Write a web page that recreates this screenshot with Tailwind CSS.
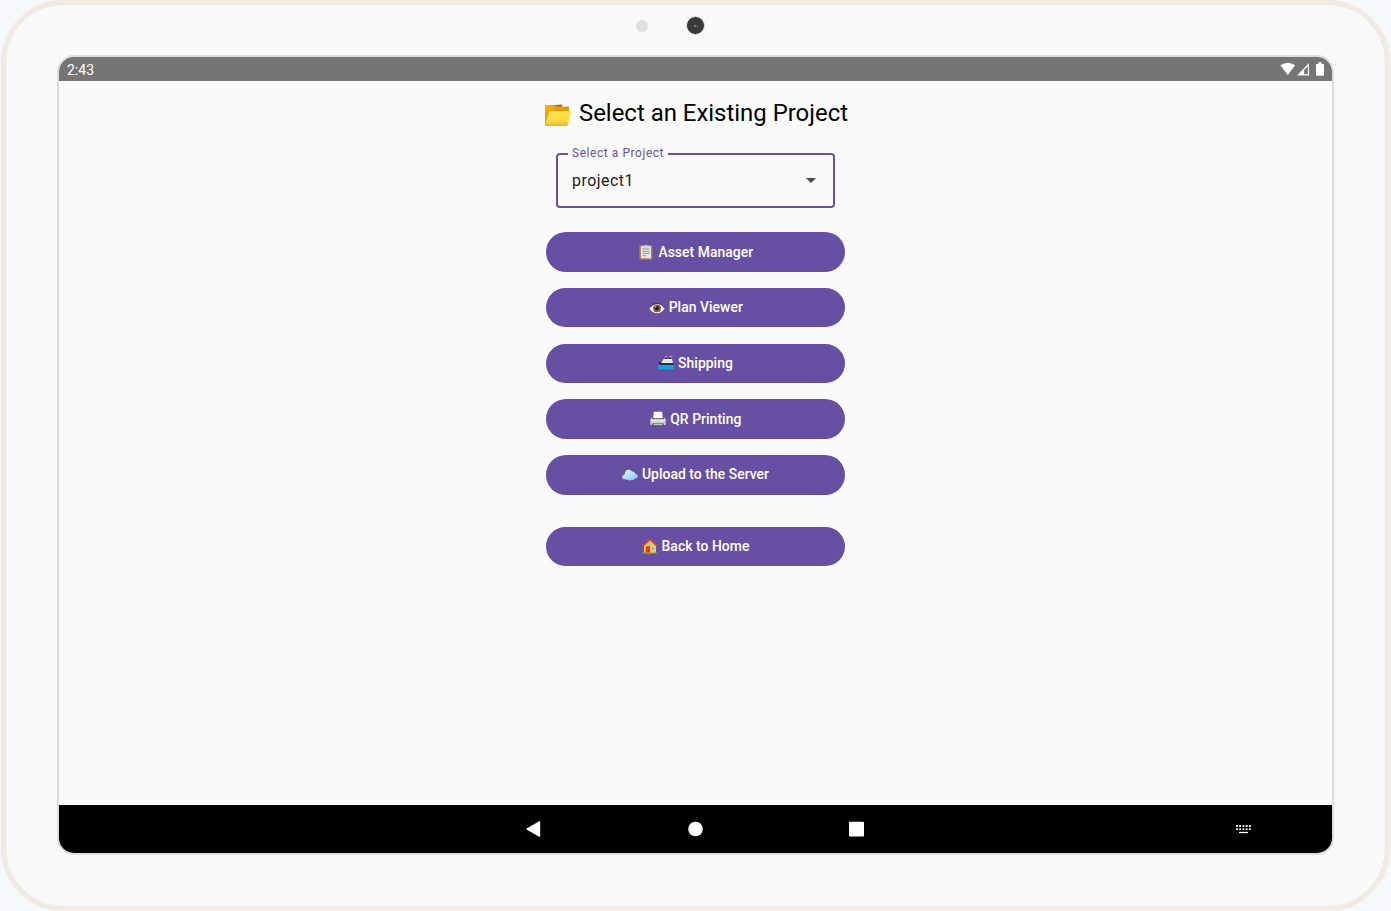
<!DOCTYPE html>
<html lang="en">
<head>
<meta charset="utf-8">
<title>Select an Existing Project</title>
<script src="https://cdn.jsdelivr.net/npm/@tailwindcss/browser@4"></script>
</head>
<body class="h-[911px] w-[1391px] overflow-hidden bg-[#f6f8fb] px-px font-['Roboto',sans-serif]">
<div class="flex h-[911px] w-[1389px] flex-col rounded-[62px] border-x-[4px] border-t-[4px] border-b-[4px] border-[#f0ece1] bg-[#f9f9f9] shadow-[inset_0_0_0_1px_#e9e6df]">
  <header class="flex h-[51px] shrink-0 items-start pt-[12px] pl-[631px]">
    <span class="mt-[4px] size-[12px] rounded-full bg-[#dfdfdf]"></span>
    <span class="ml-[38px] flex size-[19px] items-center justify-center rounded-full border-[1.5px] border-[#dfdfdf] bg-[#3a3a3a]">
      <svg class="size-[8px]" viewBox="0 0 8 8"><circle cx="3" cy="4" r="1.2" fill="#85717b"/><circle cx="5.5" cy="4.5" r="1.2" fill="#555361"/></svg>
    </span>
  </header>

  <main class="ml-[52px] flex h-[800px] w-[1277px] shrink-0 flex-col overflow-hidden rounded-[17px] border-2 border-[#dedede] bg-[#fafafa]">
    <div class="flex h-[24px] shrink-0 items-center bg-[#757575] pl-[8px] text-[14px] text-white">
      <span class="mt-[2px]">2:43</span>
      <svg class="ml-auto mr-[6px] h-[24px] w-[48px]" viewBox="1278 57 48 24" fill="#fff">
        <path d="M1280.4 65.3Q1287.8 60 1295.2 65.3L1287.8 75Z"/>
        <path fill-rule="evenodd" d="M1297 75.5L1309 63V75.5ZM1304.1 74.3H1307.9V66.2L1304.1 70Z"/>
        <path d="M1318.2 62.3h3.6v1.6h1.2q1 0 1 1v9.8q0 1-1 1h-6q-1 0-1-1v-9.8q0-1 1-1h1.2z"/>
      </svg>
    </div>

    <section class="flex flex-1 flex-col items-center">
      <h1 class="mt-[16px] flex h-[32px] items-center pl-[1px] text-[23.93px] whitespace-nowrap text-black">
        <svg class="mt-[4px] mr-[7px] h-[22px] w-[28px]" viewBox="0 0 28 22">
          <defs>
            <linearGradient id="folderBack" x1="0" y1="0" x2="1" y2="1"><stop offset="0" stop-color="#f9ad08"/><stop offset="1" stop-color="#d98500"/></linearGradient>
            <linearGradient id="folderFront" x1="0" y1="0" x2="0" y2="1"><stop offset="0" stop-color="#ffe34e"/><stop offset=".65" stop-color="#fddc43"/><stop offset="1" stop-color="#f9bc2e"/></linearGradient>
          </defs>
          <path d="M8 1.2L18 .6V4H8Z" fill="#8c6754"/>
          <path d="M1 1H10L12.5 2.4H24Q25 2.4 25 3.4V16L5 21.5H1Z" fill="url(#folderBack)"/>
          <path d="M6.4 7H26.6Q27.5 7 27.3 7.8L24 20.5Q23.7 21.5 22.5 21.5H2Q1 21.5 1.2 20.5L4.8 8Q5 7 6.4 7Z" fill="url(#folderFront)"/>
          <path d="M1.6 21.3H23" stroke="#d69b3c" stroke-width=".7"/>
        </svg>
        <span class="mt-[2px]">Select an Existing Project</span>
      </h1>

      <div class="relative mt-[24px] flex h-[55px] w-[279px] items-center rounded-[4px] border-2 border-[#6750a4] pr-[17px] pl-[14px] text-[15.9px] tracking-[0.5px] text-[#1d1b20]">
        <span class="absolute -top-[10px] left-[10px] bg-[#fafafa] pr-[4px] pl-[4px] text-[11.9px] leading-[16px] tracking-[0.6px] text-[#6750a4]">Select a Project</span>
        <span>project1</span>
        <svg class="ml-auto h-[5px] w-[10px]" viewBox="0 0 10 5"><path d="M0 0H10L5 5Z" fill="#49454f"/></svg>
      </div>

      <nav class="mt-[24.2px] flex w-[298.5px] flex-col gap-[16.1px] text-[13.9px] font-medium tracking-[0.05px] text-white">
        <button class="flex h-[39.6px] items-center justify-center rounded-full bg-[#6750a4] pl-[0.6px]">
          <svg class="mr-[4px] h-[16px] w-[16px]" viewBox="0 0 16 16">
            <rect x="1.2" y="1" width="13.4" height="14.8" rx="1" fill="#a97856"/>
            <path d="M2.9 2.2H13V14.3H2.9Z" fill="#e5e6e5"/>
            <path d="M5.3 1.5H7Q8-.7 9 1.5H10.8V3.2H5.3Z" fill="#c7c9cb"/>
            <path d="M4.5 5H11.5M4.5 7.3H11.5M4.5 9.5H11.5M4.5 11.7H8.3" stroke="#929798" stroke-width="1"/>
          </svg>
          <span>Asset Manager</span>
        </button>
        <button class="flex h-[39.6px] items-center justify-center rounded-full bg-[#6750a4] pl-[0.6px]">
          <svg class="mr-[4px] h-[16px] w-[16px]" viewBox="0 0 16 16">
            <path d="M.3 8.5Q3.8 3.8 8.2 3.8T15.7 8.5Q12.5 13.2 8 13.2T.3 8.5Z" fill="#f6f3f0"/>
            <circle cx="8" cy="8.3" r="3.9" fill="#805343"/>
            <circle cx="8" cy="8.1" r="1.9" fill="#211717"/>
            <circle cx="6.6" cy="6.6" r=".8" fill="#d6bdb2"/>
            <path d="M.5 7.8Q3.7 3.3 8.2 3.3T15.5 7.8" fill="none" stroke="#403638" stroke-width="1"/>
          </svg>
          <span>Plan Viewer</span>
        </button>
        <button class="flex h-[39.6px] items-center justify-center rounded-full bg-[#6750a4]">
          <svg class="mr-[4px] h-[16px] w-[16px]" viewBox="0 0 16 16">
            <path d="M6.5 2.3L9 1.5M11 2L14.8 1.2" stroke="#c3b8ce" stroke-width="1"/>
            <path d="M7 2.8H9V4.5H7ZM11 2.6H12.8V4.5H11Z" fill="#303742"/>
            <path d="M3.6 7.6L5.6 4.1H14L15 8.2H3Z" fill="#edf3f4"/>
            <path d="M5.5 6.2H14" stroke="#9fb9c2" stroke-width=".8" stroke-dasharray="1 1"/>
            <path d="M.6 7L4.2 8H15.5V10.4H1.2Z" fill="#20262c"/>
            <path d="M.2 10L4 10.2H15.9V14Q15.9 14.6 15.2 14.6H.9Q.1 14.6.1 14Z" fill="#14a2e5"/>
            <path d="M.2 10.3H15.7" stroke="#35bdf0" stroke-width=".6"/>
          </svg>
          <span>Shipping</span>
        </button>
        <button class="flex h-[39.6px] items-center justify-center rounded-full bg-[#6750a4] pl-[0.6px]">
          <svg class="mr-[4px] h-[16px] w-[16px]" viewBox="0 0 16 16">
            <path d="M1.8 6.6H14.2L15.6 8.6V13.2Q15.6 14 14.8 14H1.2Q.4 14 .4 13.2V8.6Z" fill="#d0d1d3"/>
            <path d="M2.6 6H13.4L14 8.2H2Z" fill="#45474b"/>
            <path d="M3.8 .8H12.2L12.8 7.2H3.2Z" fill="#f8f8f8"/>
            <path d="M.8 9.2H15.2" stroke="#f0f0f1" stroke-width="1.2"/>
            <path d="M2.6 12.2H13.4L14 14.8Q14 15.5 13.2 15.5H2.8Q2 15.5 2 14.8Z" fill="#515256"/>
            <path d="M3.9 12.7H12.1L12.8 14.2H3.2Z" fill="#c9cacb"/>
          </svg>
          <span>QR Printing</span>
        </button>
        <button class="flex h-[39.6px] items-center justify-center rounded-full bg-[#6750a4]">
          <svg class="mr-[4px] h-[16px] w-[16px]" viewBox="0 0 16 16">
            <defs><linearGradient id="cloud" x1="0" y1="0" x2=".7" y2="1"><stop offset="0" stop-color="#e9f7ff"/><stop offset="1" stop-color="#8fc9f3"/></linearGradient></defs>
            <path d="M3.2 12.3Q.2 12.3.2 9.9Q.2 7.8 2.8 7.3Q3 3 6.5 2.8Q8.9 2.6 10.1 4.5Q12.8 3.9 13.4 7Q15.9 7.3 15.8 9.5Q15.6 11.4 13.1 11.5Q12.2 13.4 9.8 12.8Q7.7 14.4 5.9 12.7Q4.5 13 3.2 12.3Z" fill="url(#cloud)"/>
          </svg>
          <span>Upload to the Server</span>
        </button>
        <button class="mt-[16px] flex h-[39.6px] items-center justify-center rounded-full bg-[#6750a4]">
          <svg class="mr-[4px] h-[16px] w-[16px]" viewBox="0 0 16 16">
            <path d="M2 7.5L8 2L14 7.5V15H2Z" fill="#fcc52d"/>
            <path d="M.9 8L8 1.4L15.1 8" fill="none" stroke="#eb3b2f" stroke-width="1.7"/>
            <circle cx="8" cy="5.5" r="1.7" fill="#80d5ed"/>
            <path d="M3.8 8.2H8V14.8H3.8Z" fill="#d83a2c"/>
            <path d="M9.6 8.8H12.7V12.4H9.6Z" fill="#49b6e1" stroke="#fff1ba" stroke-width=".7"/>
            <path d="M.4 14.2H4V15.6H.4ZM8.6 14.4H15.5V15.6H8.6Z" fill="#70a83a"/>
            <path d="M3.5 14.8H8.6V15.6H3.5Z" fill="#a4a99b"/>
          </svg>
          <span>Back to Home</span>
        </button>
      </nav>
    </section>

    <footer class="h-[48px] shrink-0 bg-black">
      <svg class="h-[48px] w-[1273px]" viewBox="59 805 1273 48" fill="#fff">
        <path d="M526.6 828.4L539.2 821.2Q540.2 820.8 540.2 821.8V836.2Q540.2 837.2 539.2 836.8L526.6 829.6Q526 829 526.6 828.4Z"/>
        <circle cx="695.5" cy="829" r="7.3"/>
        <rect x="849" y="821.8" width="15" height="14.8" rx="1"/>
        <path d="M1236 826h15M1236 829.2h15" stroke="#fff" stroke-width="1.8" stroke-dasharray="1.8 1.45"/>
        <path d="M1239 832.5h9" stroke="#fff" stroke-width="1.3"/>
      </svg>
    </footer>
  </main>
</div>
</body>
</html>
